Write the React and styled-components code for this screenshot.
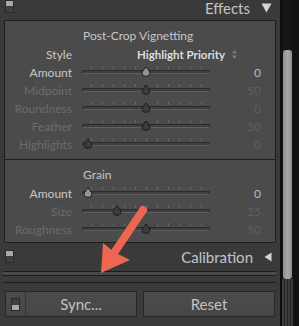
import React from "react";
import styled, { createGlobalStyle } from "styled-components";

const Global = createGlobalStyle`
  html, body { margin: 0; padding: 0; background: #2e2e2e; }
  body { font-family: Lato, "Open Sans", sans-serif; }
`;

const Frame = styled.div`
  position: relative;
  display: flex;
  width: 299px;
  height: 326px;
  overflow: hidden;
  background: #3a3a3a;
`;

const Main = styled.div`
  width: 280px;
  display: flex;
  flex-direction: column;
`;

const Header = styled.div`
  display: flex;
  align-items: center;
  justify-content: space-between;
  height: ${pr => pr.h}px;
  padding: 0 8px 0 5px;
  padding-bottom: ${pr => pr.pb || 0}px;
  box-sizing: border-box;
  color: #c4c4c4;
  font-size: 15px;
`;

const HeaderTitle = styled.div`
  display: flex;
  align-items: center;
  gap: 11px;
`;

const Switch = styled.div`
  width: 9px;
  height: 13px;
  box-sizing: border-box;
  border: 1px solid #2a2a2a;
  margin-top: ${pr => pr.mt || 0}px;
  background: ${pr => pr.on
    ? "linear-gradient(#a9a9a9 0 45%, #3f3f3f 45% 100%)"
    : "linear-gradient(#3f3f3f 0 50%, #a9a9a9 50% 100%)"};
`;

const Panel = styled.div`
  margin: 0 4px;
  border: 1px solid #1f1f1f;
  background: #4b4b4b;
`;

const Section = styled.div`
  padding: 6px 0 ${pr => pr.pb}px;
  & + & { border-top: 1px solid #1f1f1f; }
`;

const SectionTitle = styled.div`
  height: 18px;
  line-height: 18px;
  padding-left: 78px;
  font-size: 12px;
  color: #c6c6c6;
`;

const Row = styled.div`
  display: flex;
  align-items: center;
  height: 18px;
  font-size: 12px;
`;

const Label = styled.div`
  width: 67px;
  text-align: right;
  color: ${pr => pr.dim ? "#6b6b6b" : "#c8c8c8"};
`;

const StyleValue = styled.div`
  margin-left: 65px;
  display: flex;
  align-items: center;
  gap: 7px;
  color: #dedede;
  font-weight: 700;
  font-size: 11.5px;
`;

const Track = styled.div`
  position: relative;
  width: 128px;
  height: 18px;
  margin-left: 10px;
  &::before {
    content: "";
    position: absolute;
    left: 0;
    right: 0;
    top: 7px;
    height: 4px;
    box-sizing: border-box;
    border-radius: 2px;
    border: 1px solid #2c2c2c;
    border-bottom-color: #5e5e5e;
    background: #3f3f3f;
  }
`;

const Ticks = styled.div`
  position: absolute;
  left: 9px;
  top: 3px;
  width: 111px;
  height: 3px;
  background: repeating-linear-gradient(90deg, #6a6a6a 0 1px, transparent 1px 11px);
`;

const Thumb = styled.svg`
  position: absolute;
  top: 3px;
  width: 10px;
  height: 11px;
  margin-left: -5px;
`;

const Value = styled.div`
  width: 51px;
  text-align: right;
  color: ${pr => pr.dim ? "#5e5e5e" : "#bcbcbc"};
`;

const Bar = styled.div`
  height: 5px;
  margin: 0 4px 0 3px;
  box-sizing: border-box;
  border-top: 1px solid #1c1c1c;
  border-bottom: 1px solid #1c1c1c;
  background: #4a4a4a;
`;

const Rule = styled.div`
  height: 1px;
  margin: 6px 4px 8px 3px;
  background: #1e1e1e;
`;

const Buttons = styled.div`
  display: flex;
  gap: 6px;
  padding: 0 5px;
`;

const Button = styled.div`
  flex: 1;
  height: 26px;
  box-sizing: border-box;
  display: flex;
  border: 1px solid #262626;
  background: linear-gradient(#4c4c4c, #464646);
  color: #c2c2c2;
  font-size: 15px;
`;

const ButtonSide = styled.div`
  width: 19px;
  display: flex;
  align-items: center;
  justify-content: center;
  border-right: 1px solid #353535;
`;

const ButtonText = styled.div`
  flex: 1;
  display: flex;
  align-items: center;
  justify-content: center;
`;

const Scroll = styled.div`
  width: 19px;
  display: flex;
  background: #111;
`;

const ScrollEdge = styled.div`
  width: 2px;
  background: #0e0e0e;
`;

const ScrollTrack = styled.div`
  width: 11px;
  display: flex;
  flex-direction: column;
  background: #151515;
`;

const ScrollThumb = styled.div`
  margin: 50px 1px 0;
  height: 229px;
  border-radius: 3px;
  background: linear-gradient(90deg, #8e8e8e, #a6a6a6 50%, #8e8e8e);
`;

const ScrollRest = styled.div`
  flex: 1;
  background: repeating-linear-gradient(90deg, #3b3b3b 0 2px, #262626 2px 3px);
`;

const Overlay = styled.svg`
  position: absolute;
  left: 0;
  top: 0;
  pointer-events: none;
`;

const vignetting = [
  { label: "Amount", value: "0", t: 0.5, dim: false },
  { label: "Midpoint", value: "50", t: 0.5, dim: true },
  { label: "Roundness", value: "0", t: 0.5, dim: true },
  { label: "Feather", value: "50", t: 0.5, dim: true },
  { label: "Highlights", value: "0", t: 0, dim: true },
];

const grain = [
  { label: "Amount", value: "0", t: 0, dim: false },
  { label: "Size", value: "25", t: 0.25, dim: true },
  { label: "Roughness", value: "50", t: 0.5, dim: true },
];

const SliderRow = ({ row }) => (
  <Row>
    <Label dim={row.dim}>{row.label}</Label>
    <Track>
      <Ticks />
      <Thumb viewBox="0 0 10 11" style={{ left: 6 + row.t * 116 }}>
        <path
          d="M5 0.8 L8.8 6 Q9.6 10.2 5 10.2 Q0.4 10.2 1.2 6 Z"
          fill={row.dim ? "#3c3c3c" : "#959595"}
          stroke="#1c1c1c"
          strokeWidth="1"
        />
      </Thumb>
    </Track>
    <Value dim={row.dim}>{row.value}</Value>
  </Row>
);

const App = () => (
  <Frame>
    <Global />
    <Main>
      <Header h={20} pb={4}>
        <Switch on mt={-3} />
        <HeaderTitle>
          Effects
          <svg width="11" height="10" viewBox="0 0 11 10">
            <path d="M0.5 0.5 H10.5 L5.5 9.5 Z" fill="#d4d4d4" />
          </svg>
        </HeaderTitle>
      </Header>
      <Panel>
        <Section pb={6}>
          <SectionTitle>Post-Crop Vignetting</SectionTitle>
          <Row>
            <Label>Style</Label>
            <StyleValue>
              Highlight Priority
              <svg width="5" height="9" viewBox="0 0 5 9">
                <path d="M2.5 0 L5 3.5 H0 Z M2.5 9 L5 5.5 H0 Z" fill="#7a7a7a" />
              </svg>
            </StyleValue>
          </Row>
          {vignetting.map(r => <SliderRow key={r.label} row={r} />)}
        </Section>
        <Section pb={4}>
          <SectionTitle>Grain</SectionTitle>
          {grain.map(r => <SliderRow key={r.label} row={r} />)}
        </Section>
      </Panel>
      <Header h={28}>
        <Switch on mt={-2} />
        <HeaderTitle>
          Calibration
          <svg width="8" height="10" viewBox="0 0 8 10">
            <path d="M7.5 0.5 V9.5 L0.5 5 Z" fill="#d4d4d4" />
          </svg>
        </HeaderTitle>
      </Header>
      <Bar />
      <Rule />
      <Buttons>
        <Button>
          <ButtonSide><Switch /></ButtonSide>
          <ButtonText>Sync...</ButtonText>
        </Button>
        <Button>
          <ButtonText>Reset</ButtonText>
        </Button>
      </Buttons>
    </Main>
    <Scroll>
      <ScrollEdge />
      <ScrollTrack>
        <ScrollThumb />
        <ScrollRest />
      </ScrollTrack>
    </Scroll>
    <Overlay width="299" height="326" viewBox="0 0 299 326">
      <line x1="143" y1="210" x2="114" y2="253" stroke="#ec6651" strokeWidth="8" strokeLinecap="round" />
      <path d="M101 273 L103 243 L114 252 L130 260 Z" fill="#ec6651" />
    </Overlay>
  </Frame>
);

export default App;
